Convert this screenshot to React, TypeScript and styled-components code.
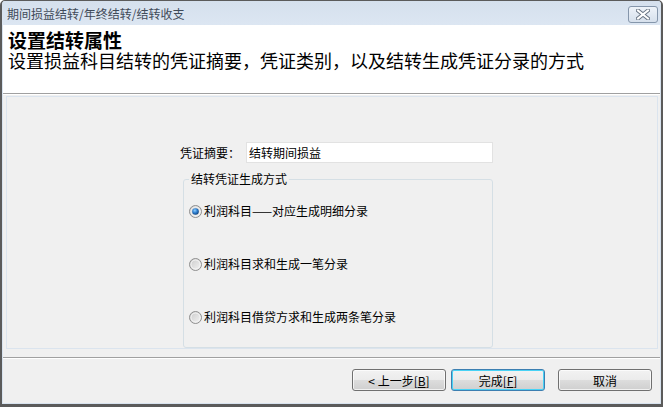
import styled, { createGlobalStyle } from "styled-components";

const GlobalStyle = createGlobalStyle`
  html, body {
    margin: 0;
    padding: 0;
    background: #ffffff;
  }
  * {
    box-sizing: border-box;
  }
`;

const font = `"Noto Sans CJK SC", "Noto Sans", sans-serif`;

const Radio = ({ checked }: { checked?: boolean }) => (
  <svg width="13" height="13" viewBox="0 0 13 13">
    <defs>
      <linearGradient id="rbg" x1="0" y1="0" x2="1" y2="1">
        <stop offset="0" stopColor="#c9c9c9" />
        <stop offset="1" stopColor="#f6f6f6" />
      </linearGradient>
      <radialGradient id="rdot" cx="0.4" cy="0.35" r="0.7">
        <stop offset="0" stopColor="#8fd0ff" />
        <stop offset="0.5" stopColor="#2f7fd0" />
        <stop offset="1" stopColor="#0d3f78" />
      </radialGradient>
    </defs>
    <circle cx="6.5" cy="6.5" r="6" fill="url(#rbg)" stroke="#8f8f8f" strokeWidth="1" />
    <circle cx="6.5" cy="6.5" r="4.5" fill="none" stroke="#f4f4f4" strokeWidth="1" />
    {checked && <circle cx="6.5" cy="6.5" r="3.3" fill="url(#rdot)" />}
  </svg>
);

const CloseIcon = () => (
  <svg width="14" height="11" viewBox="0 0 14 11">
    <path
      d="M2 1.5 L12 9.5 M12 1.5 L2 9.5"
      stroke="#6a7685"
      strokeWidth="4"
      strokeLinecap="square"
    />
    <path
      d="M2 1.5 L12 9.5 M12 1.5 L2 9.5"
      stroke="#ffffff"
      strokeWidth="2"
      strokeLinecap="square"
    />
  </svg>
);

const App = () => {
  return (
    <>
      <GlobalStyle />
      <Window>
        <TitleBar>
          <TitleText>期间损益结转/年终结转/结转收支</TitleText>
          <CloseButton>
            <CloseIcon />
          </CloseButton>
        </TitleBar>
        <Frame>
          <Header>
            <HeadTitle>设置结转属性</HeadTitle>
            <HeadSub>设置损益科目结转的凭证摘要，凭证类别，以及结转生成凭证分录的方式</HeadSub>
          </Header>
          <Divider />
          <PanelWrap>
            <Panel>
              <FieldRow>
                <Label>凭证摘要：</Label>
                <TextBox defaultValue="结转期间损益" />
              </FieldRow>
              <Group>
                <Legend>结转凭证生成方式</Legend>
                <Options>
                  <Option>
                    <Radio checked />
                    <span>利润科目——对应生成明细分录</span>
                  </Option>
                  <Option>
                    <Radio />
                    <span>利润科目求和生成一笔分录</span>
                  </Option>
                  <Option>
                    <Radio />
                    <span>利润科目借贷方求和生成两条笔分录</span>
                  </Option>
                </Options>
              </Group>
            </Panel>
          </PanelWrap>
          <Divider />
          <Footer>
            <Button>
              &lt; 上一步[<u>B</u>]
            </Button>
            <Button primary>
              完成[<u>F</u>]
            </Button>
            <Button gap={13}>取消</Button>
          </Footer>
        </Frame>
      </Window>
    </>
  );
};

export default App;

const Window = styled.div`
  width: 663px;
  height: 407px;
  display: flex;
  flex-direction: column;
  border: 2px solid #5b5b5b;
  border-top-width: 1px;
  border-bottom-width: 3px;
  border-radius: 5px 5px 0 0;
  background: #d8e3ef;
  font-family: ${font};
  font-size: 12px;
  color: #000;
  overflow: hidden;
`;

const TitleBar = styled.div`
  height: 24px;
  flex: none;
  display: flex;
  align-items: center;
  justify-content: space-between;
  padding: 0 3px 0 5px;
  background: linear-gradient(#d5e0ed, #dce6f2);
`;

const TitleText = styled.div`
  color: #3f4a58;
  font-size: 12px;
  line-height: 16px;
  margin-top: 1px;
`;

const CloseButton = styled.div`
  width: 30px;
  height: 17px;
  margin-top: 2px;
  border: 1px solid #8596ab;
  border-radius: 3px;
  background: linear-gradient(#eef3f9, #d6e0ec);
  display: flex;
  align-items: center;
  justify-content: center;
`;

const Frame = styled.div`
  flex: 1;
  display: flex;
  flex-direction: column;
  margin: 0 1px 1px 1px;
  background: #f0f0f0;
`;

const Header = styled.div`
  height: 68px;
  flex: none;
  background: #ffffff;
  padding: 5px 5px 0 5px;
`;

const HeadTitle = styled.div`
  font-size: 19px;
  font-weight: bold;
  line-height: 20px;
`;

const HeadSub = styled.div`
  font-size: 18px;
  line-height: 20px;
  margin-top: 0;
`;

const Divider = styled.div`
  height: 2px;
  flex: none;
  border-top: 1px solid #a0a0a0;
  border-bottom: 1px solid #ffffff;
`;

const PanelWrap = styled.div`
  flex: 1;
  padding: 1px 2px 8px 3px;
  display: flex;
`;

const Panel = styled.div`
  flex: 1;
  border: 1px solid #dbe4ee;
  background: #f0f0f0;
  padding: 45px 0 0 173px;
  display: flex;
  flex-direction: column;
  align-items: flex-start;
`;

const FieldRow = styled.div`
  display: flex;
  align-items: center;
`;

const Label = styled.div`
  width: 66px;
  line-height: 16px;
`;

const TextBox = styled.input`
  width: 247px;
  height: 21px;
  border: 1px solid #e2e2e2;
  background: #ffffff;
  font-family: ${font};
  font-size: 12px;
  padding: 0 2px;
  outline: none;
`;

const Group = styled.fieldset`
  width: 310px;
  height: 177px;
  margin: 8px 0 0 3px;
  padding: 16px 0 0 5px;
  border: 1px solid #d5dfe5;
  border-radius: 3px;
`;

const Legend = styled.legend`
  padding: 0 2px;
  font-size: 12px;
  line-height: 16px;
`;

const Options = styled.div`
  display: flex;
  flex-direction: column;
  gap: 37px;
`;

const Option = styled.div`
  display: flex;
  align-items: center;
  gap: 2px;
  line-height: 16px;
  svg {
    flex: none;
  }
`;

const Footer = styled.div`
  flex: 1;
  display: flex;
  justify-content: flex-end;
  align-items: flex-start;
  padding: 10px 8px 0 0;
`;

const Button = styled.div<{ primary?: boolean; gap?: number }>`
  width: 94px;
  height: 22px;
  margin-left: ${({ gap }) => (gap ? gap : 5)}px;
  display: flex;
  align-items: center;
  justify-content: center;
  font-size: 12px;
  border-radius: 3px;
  border: 1px solid ${({ primary }) => (primary ? "#3c7fb1" : "#707070")};
  background: linear-gradient(#f2f2f2 0%, #ebebeb 50%, #dddddd 51%, #cfcfcf 100%);
  box-shadow: inset 0 0 0 1px
    ${({ primary }) => (primary ? "#48d2f5" : "rgba(255,255,255,0.7)")};
  u {
    text-decoration: underline;
  }
`;
